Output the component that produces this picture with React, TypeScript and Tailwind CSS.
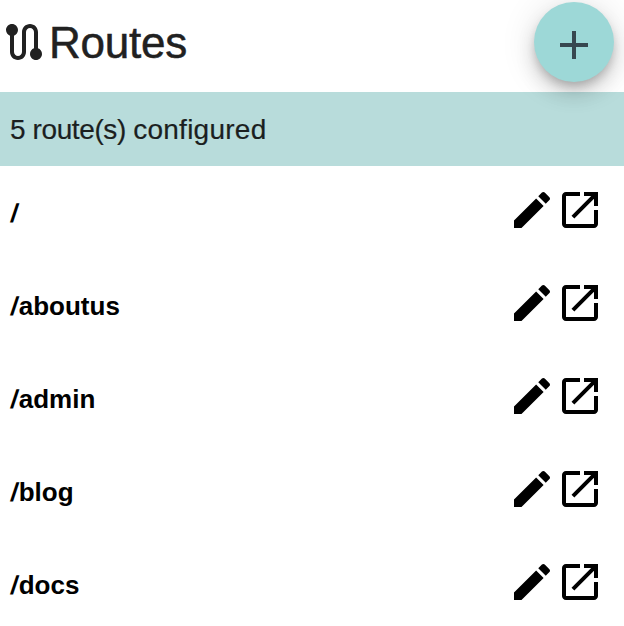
const ROUTES = ["/", "/aboutus", "/admin", "/blog", "/docs"];

const ICONS = {
  route:
    "M19 15.18V7c0-2.21-1.79-4-4-4s-4 1.79-4 4v10c0 1.1-.9 2-2 2s-2-.9-2-2V8.82C8.16 8.4 9 7.3 9 6c0-1.66-1.34-3-3-3S3 4.34 3 6c0 1.3.84 2.4 2 2.82V17c0 2.21 1.79 4 4 4s4-1.79 4-4V7c0-1.1.9-2 2-2s2 .9 2 2v8.18c-1.16.41-2 1.51-2 2.82 0 1.66 1.34 3 3 3s3-1.34 3-3c0-1.3-.84-2.4-2-2.82z",
  add: "M19 13h-6v6h-2v-6H5v-2h6V5h2v6h6v2z",
  edit: "M3 17.25V21h3.75L17.81 9.94l-3.75-3.75L3 17.25zM20.71 7.04c.39-.39.39-1.02 0-1.41l-2.34-2.34c-.39-.39-1.02-.39-1.41 0l-1.83 1.83 3.75 3.75 1.83-1.83z",
  open: "M19 19H5V5h7V3H5c-1.11 0-2 .9-2 2v14c0 1.1.89 2 2 2h14c1.1 0 2-.9 2-2v-7h-2v7zM14 3v2h3.59l-9.83 9.83 1.41 1.41L19 6.41V10h2V3h-7z",
};

function Icon({ name }: { name: keyof typeof ICONS }) {
  return (
    <svg viewBox="0 0 24 24" fill="currentColor" aria-hidden="true" className="size-12 shrink-0">
      <path d={ICONS[name]} />
    </svg>
  );
}

export default function App() {
  return (
    <div className="h-[626px] w-[624px] overflow-hidden bg-white font-['Liberation_Sans',Arial,sans-serif] text-black">
      <header className="relative z-10 flex h-[92px] items-start justify-between pr-[10px]">
        <div className="flex items-start pt-[18px] text-[#212121]">
          <Icon name="route" />
          <h1 className="pt-px pl-px text-[44px] leading-[48px] tracking-[-0.25px] [-webkit-text-stroke:0.5px_#212121]">Routes</h1>
        </div>
        <button
          aria-label="Add route"
          className="mt-[2px] flex size-20 justify-center rounded-full bg-[#9dd8d7] pt-[19px] text-[#37474f] shadow-[0_6px_10px_-2px_rgba(0,0,0,0.2),0_12px_20px_0_rgba(0,0,0,0.14),0_2px_36px_0_rgba(0,0,0,0.12)]"
        >
          <Icon name="add" />
        </button>
      </header>
      <div className="flex h-[74px] items-center bg-[#b8dcdb] px-[10px] pt-[2px] text-[28px] text-[#1b1f1f] [-webkit-text-stroke:0.2px_#1b1f1f]">
        <p>
          <span className="tracking-[-0.4px]">{ROUTES.length} route(s) </span>
          <span className="tracking-[0.25px]">configured</span>
        </p>
      </div>
      <ul>
        {ROUTES.map((route) => (
          <li key={route} className="flex h-[93px] items-start justify-between pt-5 pr-5 pl-[10px]">
            <span className="pt-[3px] text-[26px] leading-[48px] font-bold">
              <span className="mr-[1.5px] inline-block translate-x-px -skew-x-8">{route[0]}</span>
              {route.slice(1)}
            </span>
            <div className="flex">
              <button aria-label={`Edit ${route}`}>
                <Icon name="edit" />
              </button>
              <button aria-label={`Open ${route}`}>
                <Icon name="open" />
              </button>
            </div>
          </li>
        ))}
      </ul>
    </div>
  );
}
